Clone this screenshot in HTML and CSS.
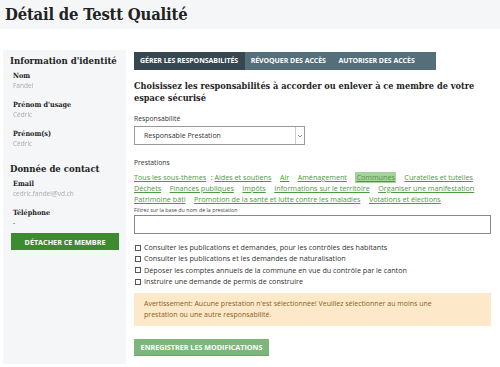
FILE: index.html
```html
<!DOCTYPE html>
<html lang="fr">
<head>
<meta charset="utf-8">
<title>Détail de Testt Qualité</title>
<link rel="stylesheet" href="styles.css">
</head>
<body>
<header class="top">
  <h1 class="title">Détail de Testt Qualité</h1>
</header>
<div class="layout">
  <aside class="side">
    <h2 class="side-h">Information d'identité</h2>
    <div class="field"><div class="lbl">Nom</div><div class="val">Fandel</div></div>
    <div class="field"><div class="lbl">Prénom d'usage</div><div class="val">Cédric</div></div>
    <div class="field"><div class="lbl">Prénom(s)</div><div class="val">Cédric</div></div>
    <h2 class="side-h second">Donnée de contact</h2>
    <div class="field"><div class="lbl">Email</div><div class="val">cedric.fandel@vd.ch</div></div>
    <div class="field last"><div class="lbl">Téléphone</div><div class="val plain">-</div></div>
    <button class="btn btn-dark">DÉTACHER CE MEMBRE</button>
  </aside>
  <main class="main">
    <nav class="tabs">
      <span class="tab active">GÉRER LES RESPONSABILITÉS</span>
      <span class="tab">RÉVOQUER DES ACCÈS</span>
      <span class="tab">AUTORISER DES ACCÈS</span>
    </nav>
    <h3 class="heading">Choisissez les responsabilités à accorder ou enlever à ce membre de votre espace sécurisé</h3>
    <div class="small-lbl">Responsabilité</div>
    <div class="select"><span>Responsable Prestation</span><span class="arrow"><svg width="6" height="6" viewBox="0 0 6 6"><path d="M1 2 L3 4 L5 2" fill="none" stroke="#777" stroke-width="0.8"/></svg></span></div>
    <div class="small-lbl presta">Prestations</div>
    <div class="links">
      <a>Tous les sous-thèmes</a><span class="colon">: <a>Aides et soutiens</a></span><a>Air</a><a>Aménagement</a><a class="sel">Communes</a><a>Curatelles et tutelles</a><a>Déchets</a><a>Finances publiques</a><a>Impôts</a><a>Informations sur le territoire</a><a>Organiser une manifestation</a><a>Patrimoine bâti</a><a>Promotion de la santé et lutte contre les maladies</a><a>Votations et élections</a>
    </div>
    <div class="tiny-lbl">Filtrez sur la base du nom de la prestation</div>
    <div class="input"></div>
    <ul class="checks">
      <li><span class="box"></span>Consulter les publications et demandes, pour les contrôles des habitants</li>
      <li><span class="box"></span>Consulter les publications et les demandes de naturalisation</li>
      <li><span class="box"></span>Déposer les comptes annuels de la commune en vue du contrôle par le canton</li>
      <li><span class="box"></span>Instruire une demande de permis de construire</li>
    </ul>
    <div class="alert">Avertissement: Aucune prestation n'est sélectionnée! Veuillez sélectionner au moins une prestation ou une autre responsabilité.</div>
    <button class="btn btn-light">ENREGISTRER LES MODIFICATIONS</button>
  </main>
</div>
</body>
</html>
```
FILE: styles.css
```css
* { box-sizing: border-box; }
html, body { margin: 0; padding: 0; }
body {
  width: 500px;
  height: 367px;
  overflow: hidden;
  background: #fff;
  font-family: "Open Sans", "Noto Sans", sans-serif;
  color: #222;
}
.top {
  background: #f5f6f8;
  height: 29px;
  padding: 4px 0 0 5px;
}
.title, .side-h, .lbl, .heading {
  font-family: "DejaVu Serif", serif;
  font-stretch: condensed;
  font-weight: bold;
  color: #222;
}
.title {
  margin: 0;
  font-size: 16.5px;
  letter-spacing: -0.2px;
  line-height: 22px;
}
.layout {
  display: flex;
  gap: 8px;
  padding: 21px 9px 0 3px;
}
.side {
  width: 123px;
  height: 314px;
  background: #f5f6f8;
  padding: 4px 7px 0 7px;
  display: flex;
  flex-direction: column;
}
.side-h {
  margin: 0 0 4px;
  font-size: 9.5px;
  line-height: 13px;
}
.side-h.second { margin-top: 4px; }
.field { padding-left: 3px; margin-bottom: 10px; }
.field.last { margin-bottom: 6px; }
.lbl {
  font-size: 7.2px;
  line-height: 10px;
}
.val {
  font-size: 6.5px;
  line-height: 9px;
  color: #aaa;
  filter: blur(0.7px);
}
.val.plain { filter: none; color: #333; }
.btn {
  border: 0;
  font-family: "Open Sans", sans-serif;
  font-weight: bold;
  font-size: 7.2px;
  color: #fff;
  height: 17px;
  padding: 0;
  text-align: center;
}
.btn-dark {
  background: #3c8b2f;
  width: 108px;
  margin-left: 1px;
}
.btn-light {
  background: #7db67a;
  width: 135px;
  margin-top: 13px;
  border-bottom: 1px solid #6aa867;
}
.main { flex: 1; padding-top: 2px; }
.tabs { display: flex; background: #546e7a; width: 302px; height: 18px; }
.tab {
  font-weight: bold;
  font-size: 7px;
  color: #fff;
  line-height: 18px;
  padding: 0 6.5px 0 6px;
  letter-spacing: -0.05px;
}
.tab.active { background: #37474f; }
.heading {
  margin: 10px 0 0;
  font-size: 9.1px;
  line-height: 12px;
}
.small-lbl { font-size: 6.8px; line-height: 9px; margin-top: 10px; color: #333; }
.small-lbl.presta { margin-top: 13px; }
.select {
  margin-top: 3px;
  width: 171px;
  height: 19px;
  border: 1px solid #999;
  display: flex;
  align-items: center;
  justify-content: space-between;
  font-size: 7px;
  padding-left: 9px;
  color: #333;
}
.arrow {
  width: 9px;
  height: 17px;
  border-left: 1px solid #ccc;
  display: flex;
  align-items: center;
  justify-content: center;
}
.links {
  margin-top: 5px;
  font-size: 7.2px;
  line-height: 11px;
  display: flex;
  flex-wrap: wrap;
  column-gap: 8.5px;
}
.links a {
  color: #4e9a43;
  text-decoration: underline;
  text-decoration-thickness: 0.5px;
  text-underline-offset: 1px;
  white-space: nowrap;
}
.links .colon { color: #444; margin-left: -4px; white-space: nowrap; }
.links a.sel { background: #a6d19c; padding: 0 1px; }
.tiny-lbl { font-size: 5.3px; color: #444; margin-top: 2px; line-height: 7px; }
.input {
  margin-top: 1px;
  width: 357px;
  height: 19px;
  border: 1px solid #888;
}
.checks {
  list-style: none;
  margin: 8px 0 0;
  padding: 0 0 0 1px;
  font-size: 7.2px;
  line-height: 11.3px;
  color: #333;
}
.checks li { display: flex; align-items: center; gap: 3px; }
.box {
  width: 6px;
  height: 6px;
  border: 0.8px solid #555;
  display: inline-block;
}
.alert {
  margin-top: 6px;
  width: 357px;
  background: #fde9c9;
  color: #8a5d22;
  font-size: 7px;
  line-height: 11px;
  padding: 5px 30px 6px 10px;
}
```
